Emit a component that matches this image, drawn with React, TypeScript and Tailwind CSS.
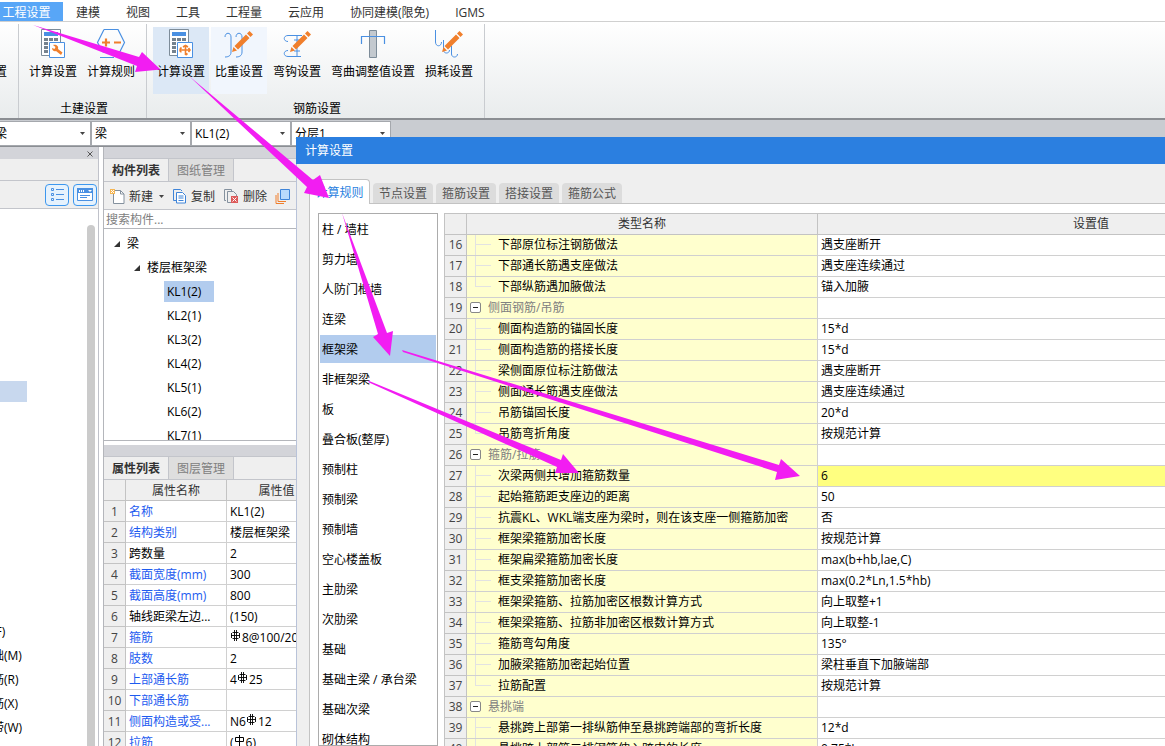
import React from "react";

type SettingRow = { no: number; name: string; value: string; group?: boolean; last?: boolean; active?: boolean };

const menuItems = ["建模", "视图", "工具", "工程量", "云应用", "协同建模(限免)", "IGMS"];

const componentRows = ["KL1(2)", "KL2(1)", "KL3(2)", "KL4(2)", "KL5(1)", "KL6(2)", "KL7(1)"];

const navRows = ["(F)", "础(M)", "筋(R)", "筋(X)", "带(W)"];

const memberTypes = [
  "柱 / 墙柱", "剪力墙", "人防门框墙", "连梁", "框架梁", "非框架梁", "板", "叠合板(整厚)", "预制柱",
  "预制梁", "预制墙", "空心楼盖板", "主肋梁", "次肋梁", "基础", "基础主梁 / 承台梁", "基础次梁", "砌体结构",
];

const settings: SettingRow[] = [
  { no: 16, name: "下部原位标注钢筋做法", value: "遇支座断开" },
  { no: 17, name: "下部通长筋遇支座做法", value: "遇支座连续通过" },
  { no: 18, name: "下部纵筋遇加腋做法", value: "锚入加腋", last: true },
  { no: 19, name: "侧面钢筋/吊筋", value: "", group: true },
  { no: 20, name: "侧面构造筋的锚固长度", value: "15*d" },
  { no: 21, name: "侧面构造筋的搭接长度", value: "15*d" },
  { no: 22, name: "梁侧面原位标注筋做法", value: "遇支座断开" },
  { no: 23, name: "侧面通长筋遇支座做法", value: "遇支座连续通过" },
  { no: 24, name: "吊筋锚固长度", value: "20*d" },
  { no: 25, name: "吊筋弯折角度", value: "按规范计算", last: true },
  { no: 26, name: "箍筋/拉筋", value: "", group: true },
  { no: 27, name: "次梁两侧共增加箍筋数量", value: "6", active: true },
  { no: 28, name: "起始箍筋距支座边的距离", value: "50" },
  { no: 29, name: "抗震KL、WKL端支座为梁时，则在该支座一侧箍筋加密", value: "否" },
  { no: 30, name: "框架梁箍筋加密长度", value: "按规范计算" },
  { no: 31, name: "框架扁梁箍筋加密长度", value: "max(b+hb,lae,C)" },
  { no: 32, name: "框支梁箍筋加密长度", value: "max(0.2*Ln,1.5*hb)" },
  { no: 33, name: "框架梁箍筋、拉筋加密区根数计算方式", value: "向上取整+1" },
  { no: 34, name: "框架梁箍筋、拉筋非加密区根数计算方式", value: "向上取整-1" },
  { no: 35, name: "箍筋弯勾角度", value: "135°" },
  { no: 36, name: "加腋梁箍筋加密起始位置", value: "梁柱垂直下加腋端部" },
  { no: 37, name: "拉筋配置", value: "按规范计算", last: true },
  { no: 38, name: "悬挑端", value: "", group: true },
  { no: 39, name: "悬挑跨上部第一排纵筋伸至悬挑跨端部的弯折长度", value: "12*d" },
  { no: 40, name: "悬挑跨上部第二排钢筋伸入跨中的长度", value: "0.75*L" },
];

function Rebar({ plain = false }: { plain?: boolean }) {
  return (
    <svg width="11" height="11" viewBox="0 0 11 11" fill="none" stroke="#000" className="mr-px mb-1.5 shrink-0">
      {plain ? (
        <path d="M1.500 2.500h8v4h-8zM5.500 0v11" />
      ) : (
        <path d="M2.500 2.500h6M1.500 3v5M9.500 3v5M1 5.500h9M2.500 8.500h6M4.500 0v11M6.500 0v11" strokeWidth=".9" />
      )}
    </svg>
  );
}

const properties: { name: string; value: React.ReactNode; plain?: boolean }[] = [
  { name: "名称", value: "KL1(2)" },
  { name: "结构类别", value: "楼层框架梁" },
  { name: "跨数量", value: "2", plain: true },
  { name: "截面宽度(mm)", value: "300" },
  { name: "截面高度(mm)", value: "800" },
  { name: "轴线距梁左边...", value: "(150)", plain: true },
  { name: "箍筋", value: <><Rebar />8@100/200(2)</> },
  { name: "肢数", value: "2" },
  { name: "上部通长筋", value: <>4<Rebar />25</> },
  { name: "下部通长筋", value: "" },
  { name: "侧面构造或受...", value: <>N6<Rebar />12</> },
  { name: "拉筋", value: <>(<Rebar plain />6)</> },
];

function Pencil() {
  return (
    <g fill="#f07f2c">
      <path d="M5 23l1.500-5 3.500 3.500zM7.500 17L19 5.500l3.500 3.500L11 20.500z" />
      <path d="M20 4.500l2.500-2.500 3.500 3.500-2.500 2.500z" />
    </g>
  );
}

function CalculatorIcon({ cross = false }: { cross?: boolean }) {
  return (
    <svg width="26" height="30" viewBox="0 0 26 30" fill="none">
      <path d="M1.500.5h19v26h-19z" fill="#fff" stroke="#7d8c99" />
      <path d="M4 3h14v4H4z" fill="#4a90e2" />
      <path d="M4 9h4v3H4zM9 9h4v3H9zM14 9h4v3h-4zM4 13h4v3H4zM4 17h4v3H4zM4 21h4v3H4z" fill="#75828e" />
      <path d="M9.500 13.500h15v15h-15z" fill="#fff" stroke="#4a90e2" />
      {cross ? (
        <path d="M17.500 16v10M12 21h10M15 18l2.500-1.500 2.500 1.500M13.500 18.500c-2 1.500-2 4 0 4.500M20.500 19l1.500 2-1.500 2M17.500 26l2-1.500" stroke="#f07f2c" strokeWidth="1.600" />
      ) : (
        <path d="M13 16c3-1 6 1 5 4l4.500 3.500-1.500 2.500-5-4c-2 1-4-1-4-3l2.500 1 1-2z" fill="#f07f2c" />
      )}
    </svg>
  );
}

function RulesIcon() {
  return (
    <svg width="30" height="30" viewBox="0 0 30 30" fill="none" stroke="#4a90e2" strokeWidth="1.200">
      <path d="M8 .5h14l6.500 13-6.500 13M8 .5l-6.500 13 6 10M4 28.500h14" />
      <path d="M6 13.500h8M10 9.500v8M18 13.500h7" stroke="#f07f2c" strokeWidth="2.200" />
    </svg>
  );
}

function RatioIcon() {
  return (
    <svg width="30" height="30" viewBox="0 0 30 30" fill="none">
      <path d="M1 8c0-5 6-5 6 0v15c0 4-3 5-6 5M12 8c0-5 6-5 6 0v15c0 4-3 5-6 5" stroke="#4a90e2" />
      <g transform="translate(3 0)"><Pencil /></g>
    </svg>
  );
}

function HookIcon() {
  return (
    <svg width="30" height="30" viewBox="0 0 30 30" fill="none">
      <path d="M20 6.500H6c-5 0-5 6 0 6M19 27.500H6c-5 0-5-6 0-6M15 7v20M12 11h6M12 22h6" stroke="#4a90e2" />
      <g transform="translate(3 0)"><Pencil /></g>
    </svg>
  );
}

function BendIcon() {
  return (
    <svg width="26" height="30" viewBox="0 0 26 30" fill="none">
      <path d="M9.500 1.500h7v27h-7z" fill="#c3c9cf" stroke="#7d8c99" />
      <path d="M1.500 15V7.500h23V15" stroke="#4a90e2" strokeWidth="1.200" />
    </svg>
  );
}

function LossIcon() {
  return (
    <svg width="30" height="30" viewBox="0 0 30 30" fill="none">
      <path d="M1.500 1v12c0 5 6 5 6 0M9.500 11v10c0 4 6 4 6 0M17.500 17v8c0 4 6 4 6 0" stroke="#4a90e2" />
      <g transform="translate(3 0)"><Pencil /></g>
    </svg>
  );
}

function RibbonButton({ label, icon, tone = "" }: { label: string; icon: React.ReactNode; tone?: string }) {
  return (
    <button className={`flex h-[67px] shrink-0 flex-col items-center gap-[3px] px-1 pt-0.5 whitespace-nowrap ${tone}`}>
      {icon}
      <span>{label}</span>
    </button>
  );
}

function RibbonGroup({ label, children }: { label: string; children: React.ReactNode }) {
  return (
    <section className="flex shrink-0 flex-col items-center justify-between border-r border-[#c9ccd0] pt-[3px] pr-[7px] pl-1.5">
      <div className="flex gap-0.5">{children}</div>
      <h2 className="pl-1 leading-[18px]">{label}</h2>
    </section>
  );
}

function Combo({ label, value, className = "" }: { label: string; value: string; className?: string }) {
  return (
    <label className={`relative block h-[23px] w-[98px] shrink-0 bg-white outline outline-[#a5a8ad] ${className}`}>
      <select aria-label={label} className="h-full w-full appearance-none bg-transparent pt-px pl-[3px] text-black outline-none">
        <option>{value}</option>
      </select>
      <svg width="5" height="3" viewBox="0 0 5 3" className="pointer-events-none absolute top-[10px] right-[5px]">
        <path d="M0 0h5L2.500 3z" fill="#444" />
      </svg>
    </label>
  );
}

function PanelTabs({ tabs }: { tabs: string[] }) {
  return (
    <div className="shrink-0 border-b border-[#c3c5cb] bg-[#efefef]">
      <div className="h-3 border-b border-[#c3c5cb] bg-[#d3d4d9]" />
      <div className="flex h-[22px]" role="tablist">
        <button role="tab" aria-selected="true" className="w-[65px] shrink-0 border-r border-[#c3c5cb] pt-0.5 font-bold text-[#333]">{tabs[0]}</button>
        <button role="tab" aria-selected="false" className="w-[65px] shrink-0 border-r border-[#c3c5cb] bg-[#dedede] pt-0.5 text-[#808080]">{tabs[1]}</button>
      </div>
    </div>
  );
}

function Caret() {
  return (
    <svg width="6" height="6" viewBox="0 0 6 6" className="shrink-0"><path d="M6 0v6H0z" fill="#333" /></svg>
  );
}

function NavigationPanel() {
  return (
    <aside className="flex w-[99px] shrink-0 flex-col border-r border-[#c0c2ca] bg-white">
      <div className="flex h-3 shrink-0 items-center justify-end bg-[#d3d4d9] pt-0.5 pr-[5px]">
        <button aria-label="关闭">
          <svg width="6" height="6" viewBox="0 0 6 6" stroke="#555"><path d="M.5.5l5 5M5.500.5l-5 5" /></svg>
        </button>
      </div>
      <div className="h-[22px] shrink-0 border-b border-[#c3c5cb] bg-[#efefef]" />
      <div className="flex h-7 shrink-0 items-center justify-end gap-1 border-b border-[#c3c5cb] bg-[#efefef] pr-px">
        <button aria-label="列表" className="flex h-[22px] w-6 items-center justify-center rounded border border-[#3d97ee] bg-[#e6f2fd]">
          <svg width="13" height="14" viewBox="0 0 13 14" fill="none" stroke="#4a90e2">
            <path d="M.5.5h2v2h-2zM.5 5.500h2v2h-2zM.5 10.500h2v2h-2zM5 1.500h8M5 6.500h8M5 11.500h8" />
          </svg>
        </button>
        <button aria-label="窗口" className="flex h-[22px] w-6 items-center justify-center rounded border border-[#3d97ee] bg-[#e6f2fd]">
          <svg width="16" height="13" viewBox="0 0 16 13" fill="none">
            <path d="M.5.5h15v12H.5z" fill="#fff" stroke="#4a90e2" />
            <path d="M0 0h16v5H0z" fill="#4a90e2" />
            <path d="M2 2h1v2H2zM4 2h1v2H4zM6 2h1v2H6zM11 2h4l-2 2z" fill="#fff" />
            <path d="M3 7.500h10M3 9.500h7" stroke="#4a90e2" />
          </svg>
        </button>
      </div>
      <div className="flex min-h-0 grow justify-between overflow-hidden">
        <div>
          <div className="mt-[172px] h-[21px] w-[27px] bg-[#c8d8ee]" />
          <ul className="mt-[218px] -ml-2">
            {navRows.map((row) => <li key={row} className="h-6 leading-6 whitespace-nowrap">{row}</li>)}
          </ul>
        </div>
        <div className="mt-4 mr-[3px] w-2 rounded-t bg-[#cbcbcb]" />
      </div>
    </aside>
  );
}

function ComponentPanel() {
  return (
    <div className="ml-1 flex w-[225px] shrink-0 flex-col border-l border-[#b4b6bb] bg-white">
      <PanelTabs tabs={["构件列表", "图纸管理"]} />
      <div className="flex h-7 shrink-0 items-center border-b border-[#c3c5cb] bg-[#efefef] pt-0.5 pl-1.5 whitespace-nowrap">
        <button className="flex items-center gap-1">
          <svg width="15" height="15" viewBox="0 0 15 15" fill="none">
            <path d="M3.500 1.500h7l3.500 3.500v9.500H3.500z" fill="#fff" stroke="#84919e" />
            <path d="M10.500 1.500V5H14" stroke="#84919e" />
            <path d="M0 0h5v5H0z" fill="#f6b653" />
            <path d="M1 1h1v1H1zM3 1h1v1H3zM2 2h1v1H2zM1 3h1v1H1zM3 3h1v1H3z" fill="#fff" />
          </svg>
          <span className="text-[#333]">新建</span>
          <svg width="5" height="3" viewBox="0 0 5 3" className="ml-0.5"><path d="M0 0h5L2.500 3z" fill="#444" /></svg>
        </button>
        <button className="ml-[9px] flex items-center gap-1">
          <svg width="14" height="15" viewBox="0 0 14 15" fill="none" stroke="#3f84d8">
            <path d="M3 11.500H.5v-11h7L9 2" />
            <path d="M3.500 3.500h6l3 3v7.500h-9z" fill="#fff" />
            <path d="M5.500 7h5M5.500 9h5M5.500 11.500h5" />
          </svg>
          <span className="text-[#333]">复制</span>
        </button>
        <button className="ml-[9px] flex items-center gap-1">
          <svg width="15" height="15" viewBox="0 0 15 15" fill="none">
            <path d="M2 11.500H.5v-11h7V2M3.500 13.500v-11h6l3 3V7M3.500 13.500H7" stroke="#84919e" />
            <path d="M7 7h7v7H7z" fill="#dd5a5a" />
            <path d="M8.500 8.500l4 4M12.500 8.500l-4 4" stroke="#fff" />
          </svg>
          <span className="text-[#333]">删除</span>
        </button>
        <button aria-label="层间复制" className="ml-2">
          <svg width="15" height="15" viewBox="0 0 15 15" fill="none">
            <path d="M1 6v8.500h8M3 4v8.500h8" stroke="#f07f2c" />
            <path d="M5.500.5h9v10h-9z" fill="#b9dafc" stroke="#3f84d8" />
          </svg>
        </button>
      </div>
      <input aria-label="搜索构件" placeholder="搜索构件..." className="h-[19px] shrink-0 border-b border-[#b4b6bb] bg-white pt-0.5 pl-0.5 outline-none placeholder:text-[#808080]" />
      <ul className="h-[212px] shrink-0 overflow-hidden border-b border-[#b4b6bb] pt-[3px] leading-6">
        <li className="flex items-center gap-[7px] pl-2.5"><Caret />梁</li>
        <li className="flex items-center gap-[7px] pl-[30px]"><Caret />楼层框架梁</li>
        {componentRows.map((row, i) => (
          <li key={row} className="flex h-6 items-start pl-[60px]">
            <span className={i === 0 ? "mt-px h-[21px] w-[50px] bg-[#b2ccee] pl-[3px] leading-[21px]" : "pl-[3px]"}>{row}</span>
          </li>
        ))}
      </ul>
      <div className="h-1 shrink-0" />
      <PanelTabs tabs={["属性列表", "图层管理"]} />
      <table className="w-[222px] table-fixed border-separate border-spacing-0 whitespace-nowrap">
        <thead>
          <tr className="h-[21px] bg-[#efefef] text-[#333]">
            <th className="w-[22px] border-r border-b border-[#c3c3c3]" />
            <th className="w-[101px] border-r border-b border-[#c3c3c3] pt-0.5 leading-[18px] font-normal">属性名称</th>
            <th className="border-b border-[#c3c3c3] pt-0.5 leading-[18px] font-normal">属性值</th>
          </tr>
        </thead>
        <tbody>
          {properties.map((p, i) => (
            <tr key={p.name} className="h-[21px] leading-[18px]">
              <td className="border-r border-b border-[#c3c3c3] bg-[#efefef] pt-0.5 text-center text-[#444]">{i + 1}</td>
              <td className={`border-r border-b border-[#d0d0d0] pt-0.5 pl-[3px] ${p.plain ? "" : "text-[#1d5bf0]"}`}>{p.name}</td>
              <td className="overflow-hidden border-b border-[#d0d0d0] pl-[3px]">
                <div className="flex h-5 items-center pt-0.5">{p.value}</div>
              </td>
            </tr>
          ))}
        </tbody>
      </table>
    </div>
  );
}

function TreeBranch({ last = false }: { last?: boolean }) {
  return (
    <span className="flex h-5 w-4 shrink-0 flex-col">
      <span className="h-[10px] border-b border-l border-[#e2e2e2]" />
      <span className={last ? "h-[10px]" : "h-[10px] border-l border-[#e2e2e2]"} />
    </span>
  );
}

function SettingsDialog() {
  return (
    <div role="dialog" aria-label="计算设置" className="absolute top-[137px] bottom-0 left-[296px] flex w-[1100px] flex-col border-l border-[#b9c3d9] bg-[#efefef]">
      <h1 className="-ml-px h-[27px] shrink-0 bg-[#2b7fe0] pl-[9px] leading-[27px] text-white">计算设置</h1>
      <div role="tablist" className="relative z-10 -mb-px ml-3 flex h-10 shrink-0 items-end gap-[3px]">
        <button role="tab" aria-selected="true" className="h-[25px] w-[61px] rounded-tr border border-b-0 border-[#c3c3c3] bg-white pt-0.5 text-[#2b7fe0]">计算规则</button>
        {["节点设置", "箍筋设置", "搭接设置", "箍筋公式"].map((t) => (
          <button role="tab" aria-selected="false" key={t} className="mb-px h-5 w-[60px] rounded-t-sm bg-[#dcdcdc] pt-0.5 leading-[18px] text-[#555]">{t}</button>
        ))}
      </div>
      <div className="ml-3 flex min-h-0 grow gap-1.5 overflow-hidden border-t border-l border-[#c3c3c3] bg-white pt-[9px] pl-2">
        <ul className="w-[120px] shrink-0 border border-[#acacac] p-px">
          {memberTypes.map((m) => (
            <li key={m} className="h-[30px]">
              <button className={`block h-7 w-full pt-0.5 pl-0.5 text-left ${m === "框架梁" ? "bg-[#b2ccee]" : ""}`}>{m}</button>
            </li>
          ))}
        </ul>
        <table className="h-fit w-[920px] shrink-0 table-fixed border-separate border-spacing-0 border-t border-l border-[#c3c3c3] whitespace-nowrap">
          <thead>
            <tr className="h-[21px] bg-[#efefef] text-[#333]">
              <th className="w-[22px] border-r border-b border-[#c3c3c3]" />
              <th className="w-[351px] border-r border-b border-[#c3c3c3] leading-5 font-normal">类型名称</th>
              <th className="border-b border-[#c3c3c3] leading-5 font-normal">设置值</th>
            </tr>
          </thead>
          <tbody>
            {settings.map((s) => (
              <tr key={s.no} className="h-[21px]">
                <td className="border-r border-b border-[#c3c3c3] bg-[#efefef] text-center text-[#444]">{s.no}</td>
                <td className="border-r border-b border-[#d0d0d0] bg-[#ffffce]">
                  {s.group ? (
                    <div className="flex h-5 items-center gap-[7px] pl-[3px] text-[#808080]">
                      <button aria-label={`折叠 ${s.name}`} className="mb-0.5 flex size-[11px] items-center justify-center rounded-[2px] border border-[#888] bg-white">
                        <span className="h-px w-[5px] bg-[#222]" />
                      </button>
                      {s.name}
                    </div>
                  ) : (
                    <div className="flex h-5 items-center gap-[7px] pl-2"><TreeBranch last={s.last} />{s.name}</div>
                  )}
                </td>
                <td className={`border-b border-[#d0d0d0] pl-[3px] ${s.active ? "bg-[#ffff80]" : ""}`}>{s.value}</td>
              </tr>
            ))}
          </tbody>
        </table>
      </div>
    </div>
  );
}

export default function App() {
  return (
    <div className="relative flex h-screen flex-col overflow-hidden bg-[#c9ccd1] font-['Open_Sans','Noto_Sans_CJK_SC',sans-serif] text-[12px] leading-5 text-black">
      <nav className="flex h-[22px] shrink-0 items-end gap-[26px] border-b border-[#d0d0d0] bg-white whitespace-nowrap text-[#333]">
        <button className="-mr-[13px] h-[19px] w-[63px] bg-[#58a6f7] pt-0.5 pr-2.5 leading-[17px] text-white">工程设置</button>
        {menuItems.map((m) => <button key={m} className="leading-[17px]">{m}</button>)}
      </nav>
      <div className="flex h-[98px] shrink-0 border-b-2 border-[#8b8e93] bg-linear-to-b from-white to-[#e9eced] pt-0.5">
        <div className="flex w-[19px] shrink-0 justify-end overflow-hidden border-r border-[#c9ccd0] pt-[38px] pr-[11px]"><span>置</span></div>
        <RibbonGroup label="土建设置">
          <RibbonButton label="计算设置" icon={<CalculatorIcon />} />
          <RibbonButton label="计算规则" icon={<RulesIcon />} />
        </RibbonGroup>
        <RibbonGroup label="钢筋设置">
          <RibbonButton label="计算设置" icon={<CalculatorIcon cross />} tone="bg-[#dce8f6]" />
          <RibbonButton label="比重设置" icon={<RatioIcon />} tone="bg-[#f1f6fd]" />
          <RibbonButton label="弯钩设置" icon={<HookIcon />} />
          <RibbonButton label="弯曲调整值设置" icon={<BendIcon />} />
          <RibbonButton label="损耗设置" icon={<LossIcon />} />
        </RibbonGroup>
      </div>
      <div className="flex h-[27px] shrink-0 items-center gap-0.5 border-b-2 border-[#8b8e93] pt-px">
        <Combo label="构件类别" value="梁" className="-ml-2" />
        <Combo label="构件类型" value="梁" />
        <Combo label="构件名称" value="KL1(2)" />
        <Combo label="分层" value="分层1" />
      </div>
      <main className="flex min-h-0 grow bg-white">
        <NavigationPanel />
        <ComponentPanel />
      </main>
      <SettingsDialog />
      <svg width="1165" height="746" viewBox="0 0 1165 746" className="pointer-events-none absolute top-0 left-0 z-20" fill="#f21df2">
        <path d="M33 25L139 57l3-5 18.500 17.500L135 72l2-6z" />
        <path d="M189 76l124 104 7-5 9 23-25-5 3-6z" />
        <path d="M342 213l45 120 6-2-3 25-17-19 5-3z" />
        <path d="M402 350l1 2 374 120-2 8 25-4-19-17-2 6z" />
        <path d="M368 380.500l1 2 188 84.500-2 6h24l-16-19-2 6z" />
      </svg>
    </div>
  );
}
